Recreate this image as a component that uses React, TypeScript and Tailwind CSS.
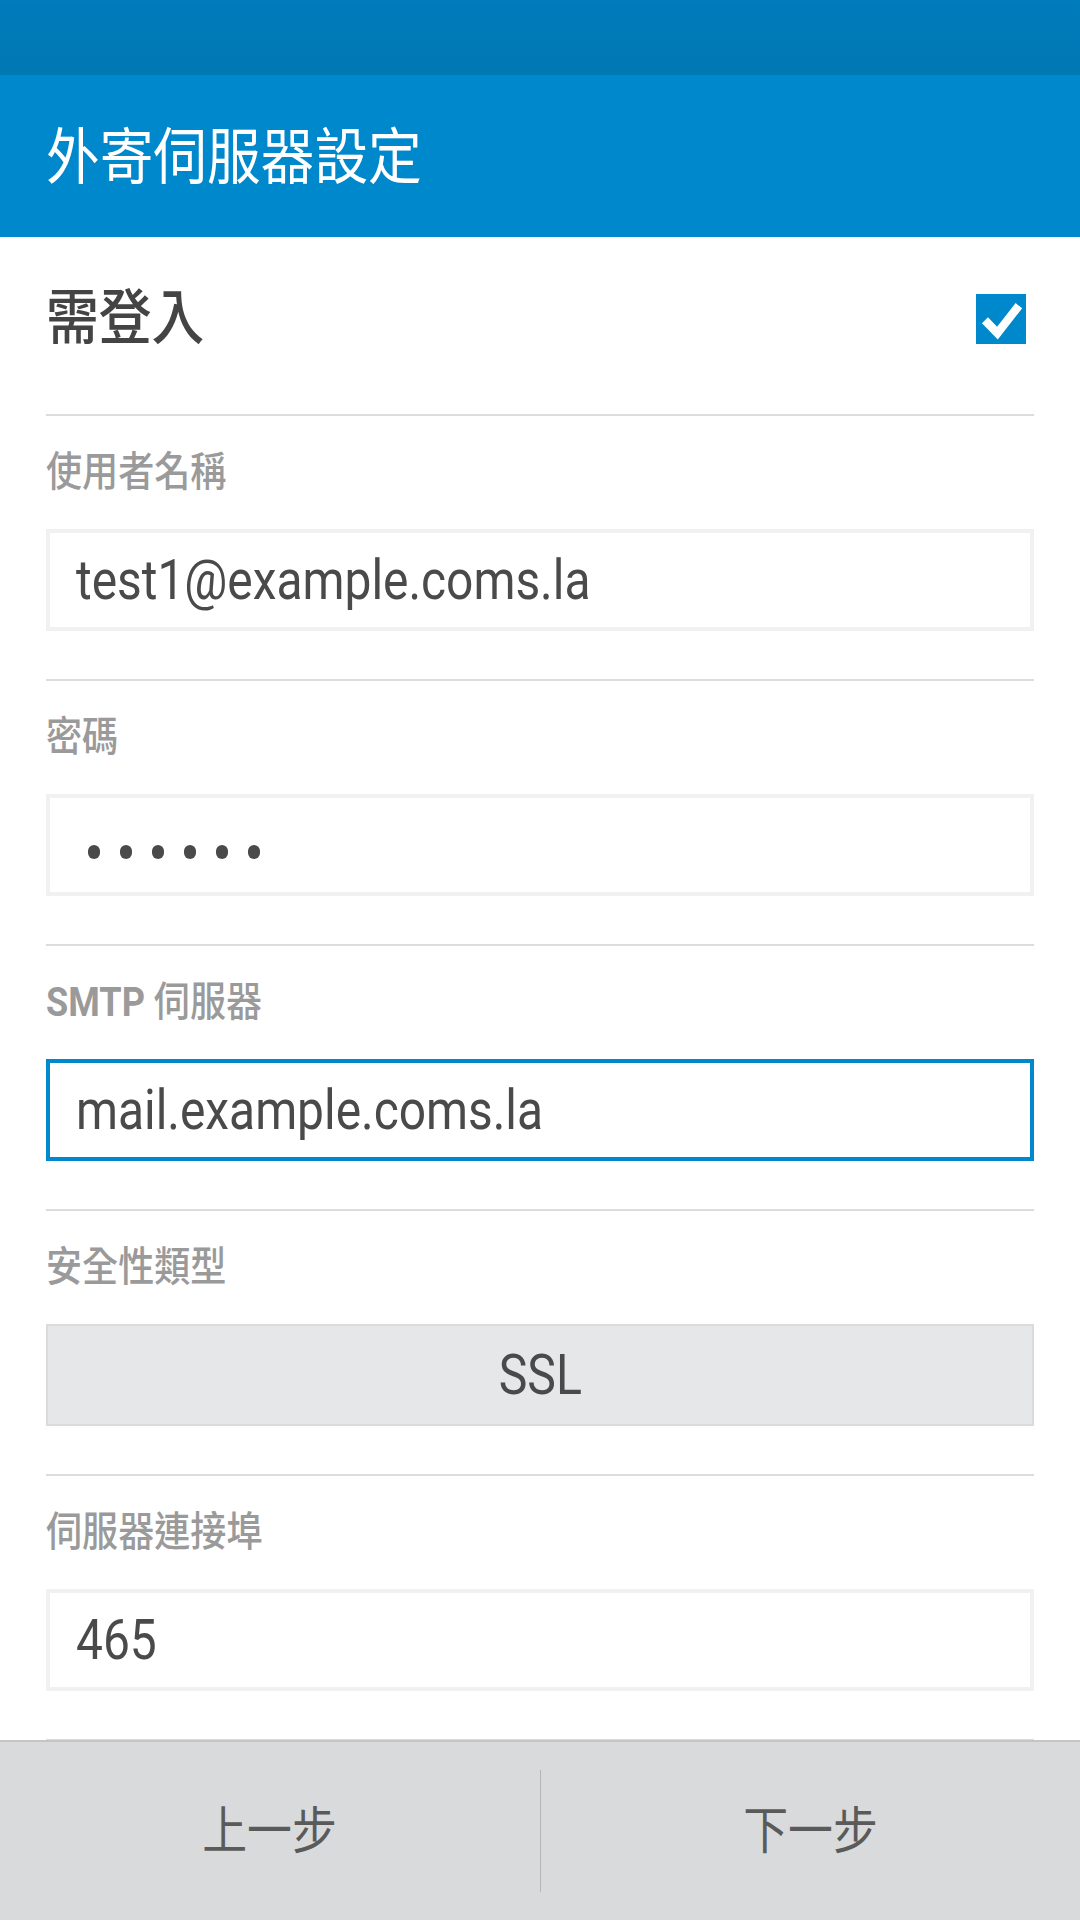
import React from "react";

// Android 的外寄伺服器設定畫面
const squeeze = "inline-block scale-x-[0.88] origin-left whitespace-nowrap";

type Field = {
    label: React.ReactNode;
    value: string;
    kind: "text" | "password" | "focused" | "select";
};

const fields: Field[] = [
    { label: "使用者名稱", value: "test1@example.coms.la", kind: "text" },
    { label: "密碼", value: "••••••", kind: "password" },
    {
        label: (
            <>
                <span className="font-bold">SMTP</span> 伺服器
            </>
        ),
        value: "mail.example.coms.la",
        kind: "focused",
    },
    { label: "安全性類型", value: "SSL", kind: "select" },
    { label: "伺服器連接埠", value: "465", kind: "text" },
];

const FieldBox = ({ field }: { field: Field }) => {
    if (field.kind === "select") {
        return (
            <div className="h-[102px] bg-[#e6e7e9] border-2 border-[#dadbdd] flex items-center justify-center">
                <span className="inline-block scale-x-[0.86] origin-center text-[56px] leading-none text-[#4a4a4a]">
                    {field.value}
                </span>
            </div>
        );
    }

    const border = field.kind === "focused" ? "border-[#0088cc]" : "border-[#f0f1f1]";

    return (
        <div className={`h-[102px] bg-white border-4 ${border} flex items-center pl-[26px]`}>
            {field.kind === "password" ? (
                <div className="flex gap-[20px] pl-[12px] pt-[14px]">
                    {Array.from({ length: 6 }).map((_, i) => (
                        <span key={i} className="w-[12px] h-[14px] rounded-full bg-[#4a4a4a]" />
                    ))}
                </div>
            ) : (
                <span className="inline-block scale-x-[0.855] origin-left whitespace-nowrap text-[56px] leading-none text-[#4a4a4a]">
                    {field.value}
                </span>
            )}
        </div>
    );
};

const App = () => {
    return (
        <div className="w-[1080px] h-[1920px] flex flex-col bg-white overflow-hidden font-['Roboto','Noto_Sans_CJK_TC',sans-serif]">
            {/* 상태바 */}
            <div className="h-[75px] bg-gradient-to-b from-[#007bbb] to-[#0078b4]" />

            {/* 타이틀 */}
            <div className="h-[162px] bg-[#0088cc] flex items-center pl-[46px] pt-[4px]">
                <span className={`${squeeze} text-[61px] leading-none text-white`}>外寄伺服器設定</span>
            </div>

            <div className="flex-1 overflow-hidden px-[46px]">
                {/* 需登入 */}
                <div className="h-[177px] flex items-center justify-between pb-[14px]">
                    <span className={`${squeeze} text-[60px] leading-none font-medium text-[#444444]`}>需登入</span>
                    <div className="w-[50px] h-[50px] bg-[#0088cc] mr-[8px] flex items-center justify-center">
                        <svg viewBox="0 0 24 24" className="w-[50px] h-[50px]">
                            <path
                                d="M4.3 12.6 L10.3 18.8 L20.6 5.6"
                                fill="none"
                                stroke="white"
                                strokeWidth="4"
                                strokeLinejoin="miter"
                            />
                        </svg>
                    </div>
                </div>

                {fields.map((field, i) => (
                    <div key={i} className="border-t-2 border-[#dcdcdc] pt-[36px] pb-[48px]">
                        <div className="h-[40px] flex items-center">
                            <span className={`${squeeze} text-[41px] leading-none font-medium text-[#9a9a9a]`}>
                                {field.label}
                            </span>
                        </div>
                        <div className="mt-[37px]">
                            <FieldBox field={field} />
                        </div>
                    </div>
                ))}
                <div className="border-t-2 border-[#dcdcdc]" />
            </div>

            {/* 하단 버튼 */}
            <div className="h-[180px] bg-[#d9dadc] border-t-2 border-[#c4c5c7] flex">
                <button className="flex-1 flex items-center justify-center">
                    <span className="inline-block scale-x-[0.88] origin-center text-[51px] leading-none text-[#5a5a5a]">
                        上一步
                    </span>
                </button>
                <div className="w-px bg-[#b4b5b7] my-[28px]" />
                <button className="flex-1 flex items-center justify-center">
                    <span className="inline-block scale-x-[0.88] origin-center text-[51px] leading-none text-[#5a5a5a]">
                        下一步
                    </span>
                </button>
            </div>
        </div>
    );
};

export default App;
